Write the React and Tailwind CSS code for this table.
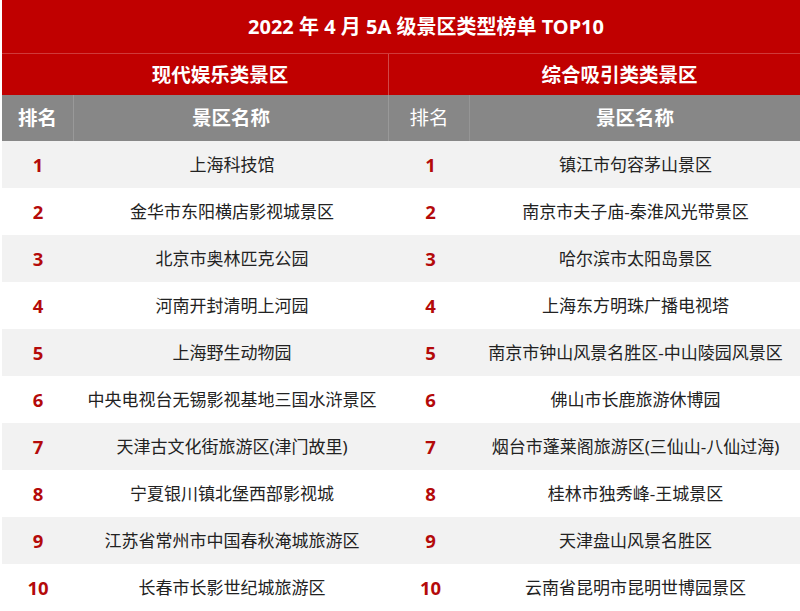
import React from "react";

const left = [
  "上海科技馆",
  "金华市东阳横店影视城景区",
  "北京市奥林匹克公园",
  "河南开封清明上河园",
  "上海野生动物园",
  "中央电视台无锡影视基地三国水浒景区",
  "天津古文化街旅游区(津门故里)",
  "宁夏银川镇北堡西部影视城",
  "江苏省常州市中国春秋淹城旅游区",
  "长春市长影世纪城旅游区",
];
const right = [
  "镇江市句容茅山景区",
  "南京市夫子庙-秦淮风光带景区",
  "哈尔滨市太阳岛景区",
  "上海东方明珠广播电视塔",
  "南京市钟山风景名胜区-中山陵园风景区",
  "佛山市长鹿旅游休博园",
  "烟台市蓬莱阁旅游区(三仙山-八仙过海)",
  "桂林市独秀峰-王城景区",
  "天津盘山风景名胜区",
  "云南省昆明市昆明世博园景区",
];

export default function App() {
  return (
    <div
      className="w-[800px] h-[611px] overflow-hidden bg-white pl-[2px] flex flex-col"
      style={{ fontFamily: '"Noto Sans", "Noto Sans CJK SC", sans-serif' }}
    >
      <div className="h-[54px] shrink-0 bg-[#c00000] border-b border-[#cf3a3a] flex items-center justify-center pl-[50px] text-white font-bold text-[20px]">
        2022 年 4 月 5A 级景区类型榜单 TOP10
      </div>
      <div className="h-[41px] shrink-0 bg-[#c00000] flex text-white font-bold text-[19.5px]">
        <div className="w-[387px] flex items-center justify-center pl-[50px] border-r border-[#d14848]">
          现代娱乐类景区
        </div>
        <div className="flex-1 flex items-center justify-center pl-[50px]">
          综合吸引类类景区
        </div>
      </div>
      <div className="h-[46px] shrink-0 bg-[#878787] flex text-white text-[19.5px]">
        <div className="w-[72px] flex items-center justify-center font-bold border-r border-[#999999]">排名</div>
        <div className="w-[315px] flex items-center justify-center font-bold border-r border-[#999999]">景区名称</div>
        <div className="w-[81px] flex items-center justify-center border-r border-[#959595]">排名</div>
        <div className="flex-1 flex items-center justify-center font-bold">景区名称</div>
      </div>
      {left.map((name, i) => (
        <div
          key={i}
          className={`h-[47px] shrink-0 flex items-center text-[17px] text-[#222222] ${i % 2 === 0 ? "bg-[#f2f2f2]" : "bg-white"}`}
        >
          <div className="w-[72px] text-center font-bold text-[18.5px] text-[#b40a0a]">{i + 1}</div>
          <div className="w-[316px] text-center whitespace-nowrap">{name}</div>
          <div className="w-[81px] text-center font-bold text-[18.5px] text-[#b40a0a]">{i + 1}</div>
          <div className="flex-1 text-center whitespace-nowrap">{right[i]}</div>
        </div>
      ))}
    </div>
  );
}
